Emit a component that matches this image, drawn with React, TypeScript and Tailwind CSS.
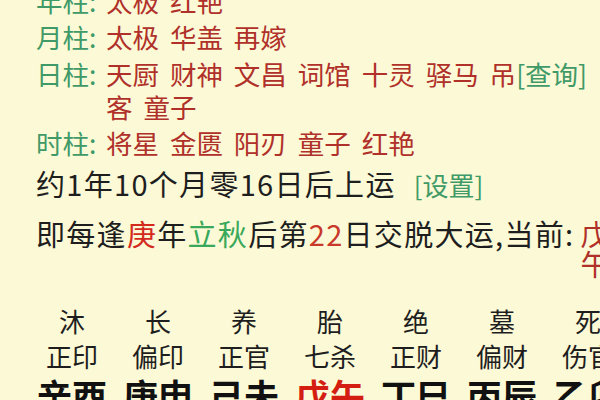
import React from "react";

const G = "text-[#3f9a68]";
const R = "text-[#b0302a]";

function Entry({ label, lines, className = "" }: { label: string; lines: React.ReactNode[]; className?: string }) {
  return (
    <div className={`flex leading-[33px] ${className}`}>
      <div className={`w-[70px] shrink-0 ${G}`}>{label}:</div>
      <div className="flex flex-col">
        {lines.map((l, i) => (
          <div key={i} className={`whitespace-nowrap [word-spacing:5px] ${R}`}>{l}</div>
        ))}
      </div>
    </div>
  );
}

const cols1 = ["沐", "长", "养", "胎", "绝", "墓", "死"];
const cols2 = ["正印", "偏印", "正官", "七杀", "正财", "偏财", "伤官"];
const cols3 = ["辛酉", "庚申", "己未", "戊午", "丁巳", "丙辰", "乙卯"];

export default function App() {
  return (
    <div
      className="w-[600px] h-[400px] overflow-hidden bg-[#fcf9d6] text-[26.5px] text-[#1e1e1e]"
      style={{ fontFamily: '"Noto Sans CJK SC", "Noto Sans", sans-serif' }}
    >
      <div className="pl-[36px] -mt-[16px]">
        <Entry label="年柱" lines={["太极 红艳"]} />
        <Entry className="mt-[3px]" label="月柱" lines={["太极 华盖 再嫁"]} />
        <Entry
          className="mt-[4px]"
          label="日柱"
          lines={[
            <>
              天厨 财神 文昌 词馆 十灵 驿马 吊<span className={G}>[查询]</span>
            </>,
            "客 童子",
          ]}
        />
        <Entry className="mt-[3px]" label="时柱" lines={["将星 金匮 阳刃 童子 红艳"]} />
        <div className="mt-[7px] leading-[34px] whitespace-nowrap text-[29px] tracking-[1.3px]">
          约1年10个月零16日后上运<span className={`${G} text-[26px] tracking-normal ml-[18px]`}>[设置]</span>
        </div>
        <div className="mt-[14px] flex leading-[34px] whitespace-nowrap text-[29px] tracking-[1.3px]">
          <span>
            即每逢<span className="text-[#d42a1e]">庚</span>年<span className="text-[#3aa85a]">立秋</span>后第
            <span className="text-[#c8392b]">22</span>日交脱大运,当前:
          </span>
          <span className={`flex flex-col ml-[6px] ${R}`}>
            <span>戊</span>
            <span className="-mt-[4px]">午</span>
          </span>
        </div>
      </div>
      <div className="mt-[23px] ml-[29px] grid grid-cols-[repeat(7,86px)] text-center">
        {cols1.map((c) => (
          <div key={c} className="leading-[36px] text-[26px]">{c}</div>
        ))}
        {cols2.map((c) => (
          <div key={c} className="leading-[34px] text-[26px]">{c}</div>
        ))}
        {cols3.map((c) => (
          <div
            key={c}
            className={`leading-[44px] text-[35px] font-bold ${c === "戊午" ? "text-[#d41e12]" : "text-[#111]"}`}
          >
            {c}
          </div>
        ))}
      </div>
    </div>
  );
}
